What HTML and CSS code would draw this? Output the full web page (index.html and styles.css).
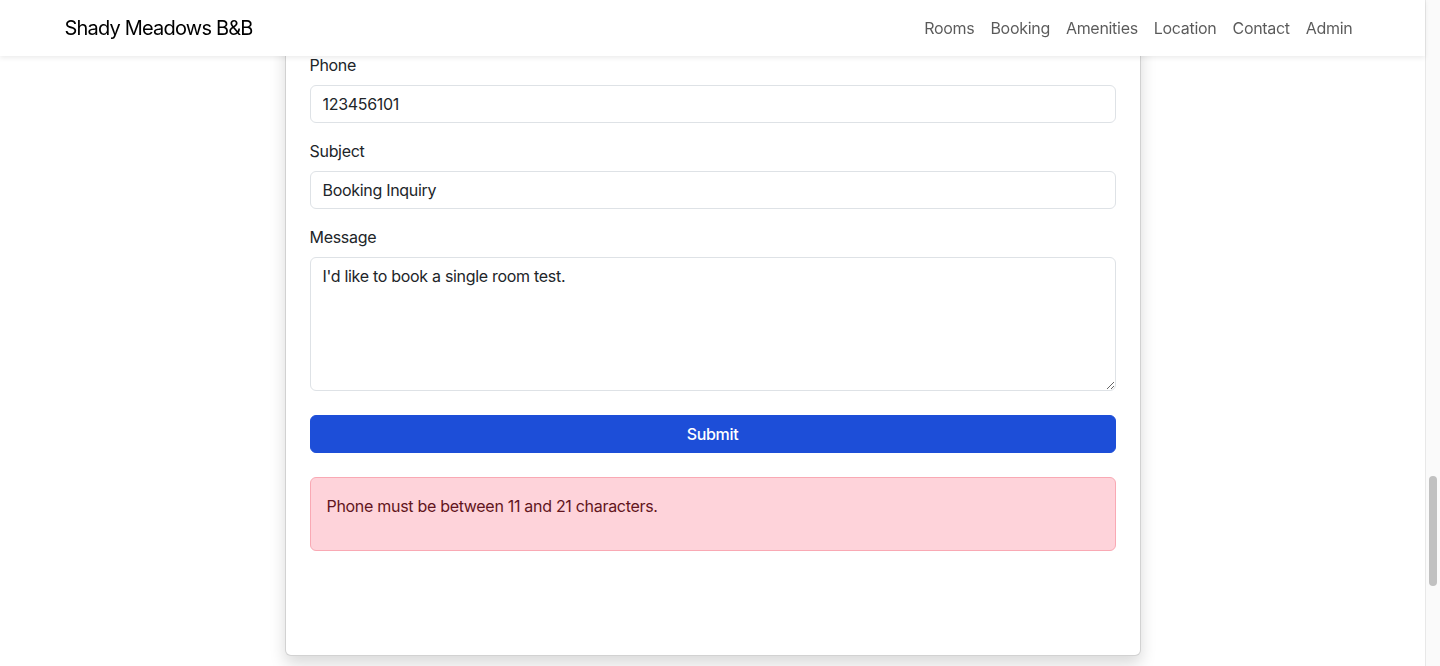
FILE: index.html
```html
<!DOCTYPE html>
<html lang="en">
<head>
<meta charset="utf-8">
<title>Shady Meadows B&amp;B</title>
<link rel="stylesheet" href="styles.css">
</head>
<body>
<div class="viewport">
  <div class="page">
    <nav class="navbar">
      <div class="nav-container">
        <a class="brand" href="#">Shady Meadows B&amp;B</a>
        <ul class="nav-links">
          <li><a href="#">Rooms</a></li>
          <li><a href="#">Booking</a></li>
          <li><a href="#">Amenities</a></li>
          <li><a href="#">Location</a></li>
          <li><a href="#">Contact</a></li>
          <li><a href="#">Admin</a></li>
        </ul>
      </div>
    </nav>
    <main class="main">
      <div class="card">
        <form class="card-body">
          <div class="field">
            <label class="label" for="phone">Phone</label>
            <input class="control" id="phone" type="text" value="123456101">
          </div>
          <div class="field">
            <label class="label" for="subject">Subject</label>
            <input class="control" id="subject" type="text" value="Booking Inquiry">
          </div>
          <div class="field field-last">
            <label class="label" for="message">Message</label>
            <textarea class="control textarea" id="message" rows="5">I'd like to book a single room test.</textarea>
          </div>
          <button class="submit" type="button">Submit</button>
          <div class="alert">
            <p>Phone must be between 11 and 21 characters.</p>
          </div>
        </form>
      </div>
    </main>
  </div>
  <div class="scrollbar"><div class="thumb"></div></div>
</div>
</body>
</html>
```

FILE: styles.css
```css
* { box-sizing: border-box; }
html, body { margin: 0; padding: 0; height: 100%; overflow: hidden; }
body {
  font-family: "Inter", "Liberation Sans", sans-serif;
  font-size: 16px;
  line-height: 24px;
  letter-spacing: -0.3px;
  color: #212529;
  background: #fff;
}
.viewport { display: flex; height: 666px; }
.page { flex: 1; position: relative; overflow: hidden; }
.navbar {
  position: fixed;
  top: 0;
  left: 0;
  right: 15px;
  height: 56px;
  background: #fff;
  box-shadow: 0 2px 5px rgba(0,0,0,0.08);
  z-index: 10;
}
.nav-container {
  max-width: 1320px;
  margin: 0 auto;
  padding: 0 12px;
  height: 56px;
  display: flex;
  align-items: center;
  justify-content: space-between;
}
.brand {
  font-size: 20px;
  line-height: 30px;
  color: #000;
  text-decoration: none;
  letter-spacing: -0.8px;
}
.nav-links { list-style: none; margin: 0; padding: 0; display: flex; }
.nav-links a {
  display: block;
  padding: 8px 8px;
  color: rgba(0,0,0,0.65);
  text-decoration: none;
}
.main { display: flex; justify-content: center; }
.card {
  width: 856px;
  background: #fff;
  border: 1px solid rgba(0,0,0,0.175);
  border-top: none;
  border-radius: 0 0 6px 6px;
  box-shadow: 0 8px 16px rgba(0,0,0,0.15);
}
.card-body { padding: 53px 24px 104px; display: flex; flex-direction: column; }
.field { display: flex; flex-direction: column; margin-bottom: 16px; }
.field-last { margin-bottom: 24px; }
.label { margin-bottom: 8px; }
.control {
  font: inherit;
  letter-spacing: inherit;
  color: #212529;
  height: 38px;
  padding: 6px 12px;
  border: 1px solid #dee2e6;
  border-radius: 6px;
  background: #fff;
}
.textarea { height: 134px; resize: vertical; }
.submit {
  font: inherit;
  font-weight: 500;
  letter-spacing: inherit;
  height: 38px;
  border: 1px solid #1d4ed8;
  border-radius: 6px;
  background: #1d4ed8;
  color: #fff;
  margin-bottom: 24px;
}
.alert {
  background: #fed3da;
  border: 1px solid #f9a9b4;
  border-radius: 6px;
  color: #621520;
  padding: 16px;
}
.alert p { margin: 0 0 16px; }
.scrollbar {
  width: 15px;
  background: #fafafa;
  border-left: 1px solid #e8e8e8;
  display: flex;
  flex-direction: column;
  padding: 476px 0 0 3px;
}
.thumb { width: 8px; height: 110px; border-radius: 4px; background: #c1c1c1; }
```
